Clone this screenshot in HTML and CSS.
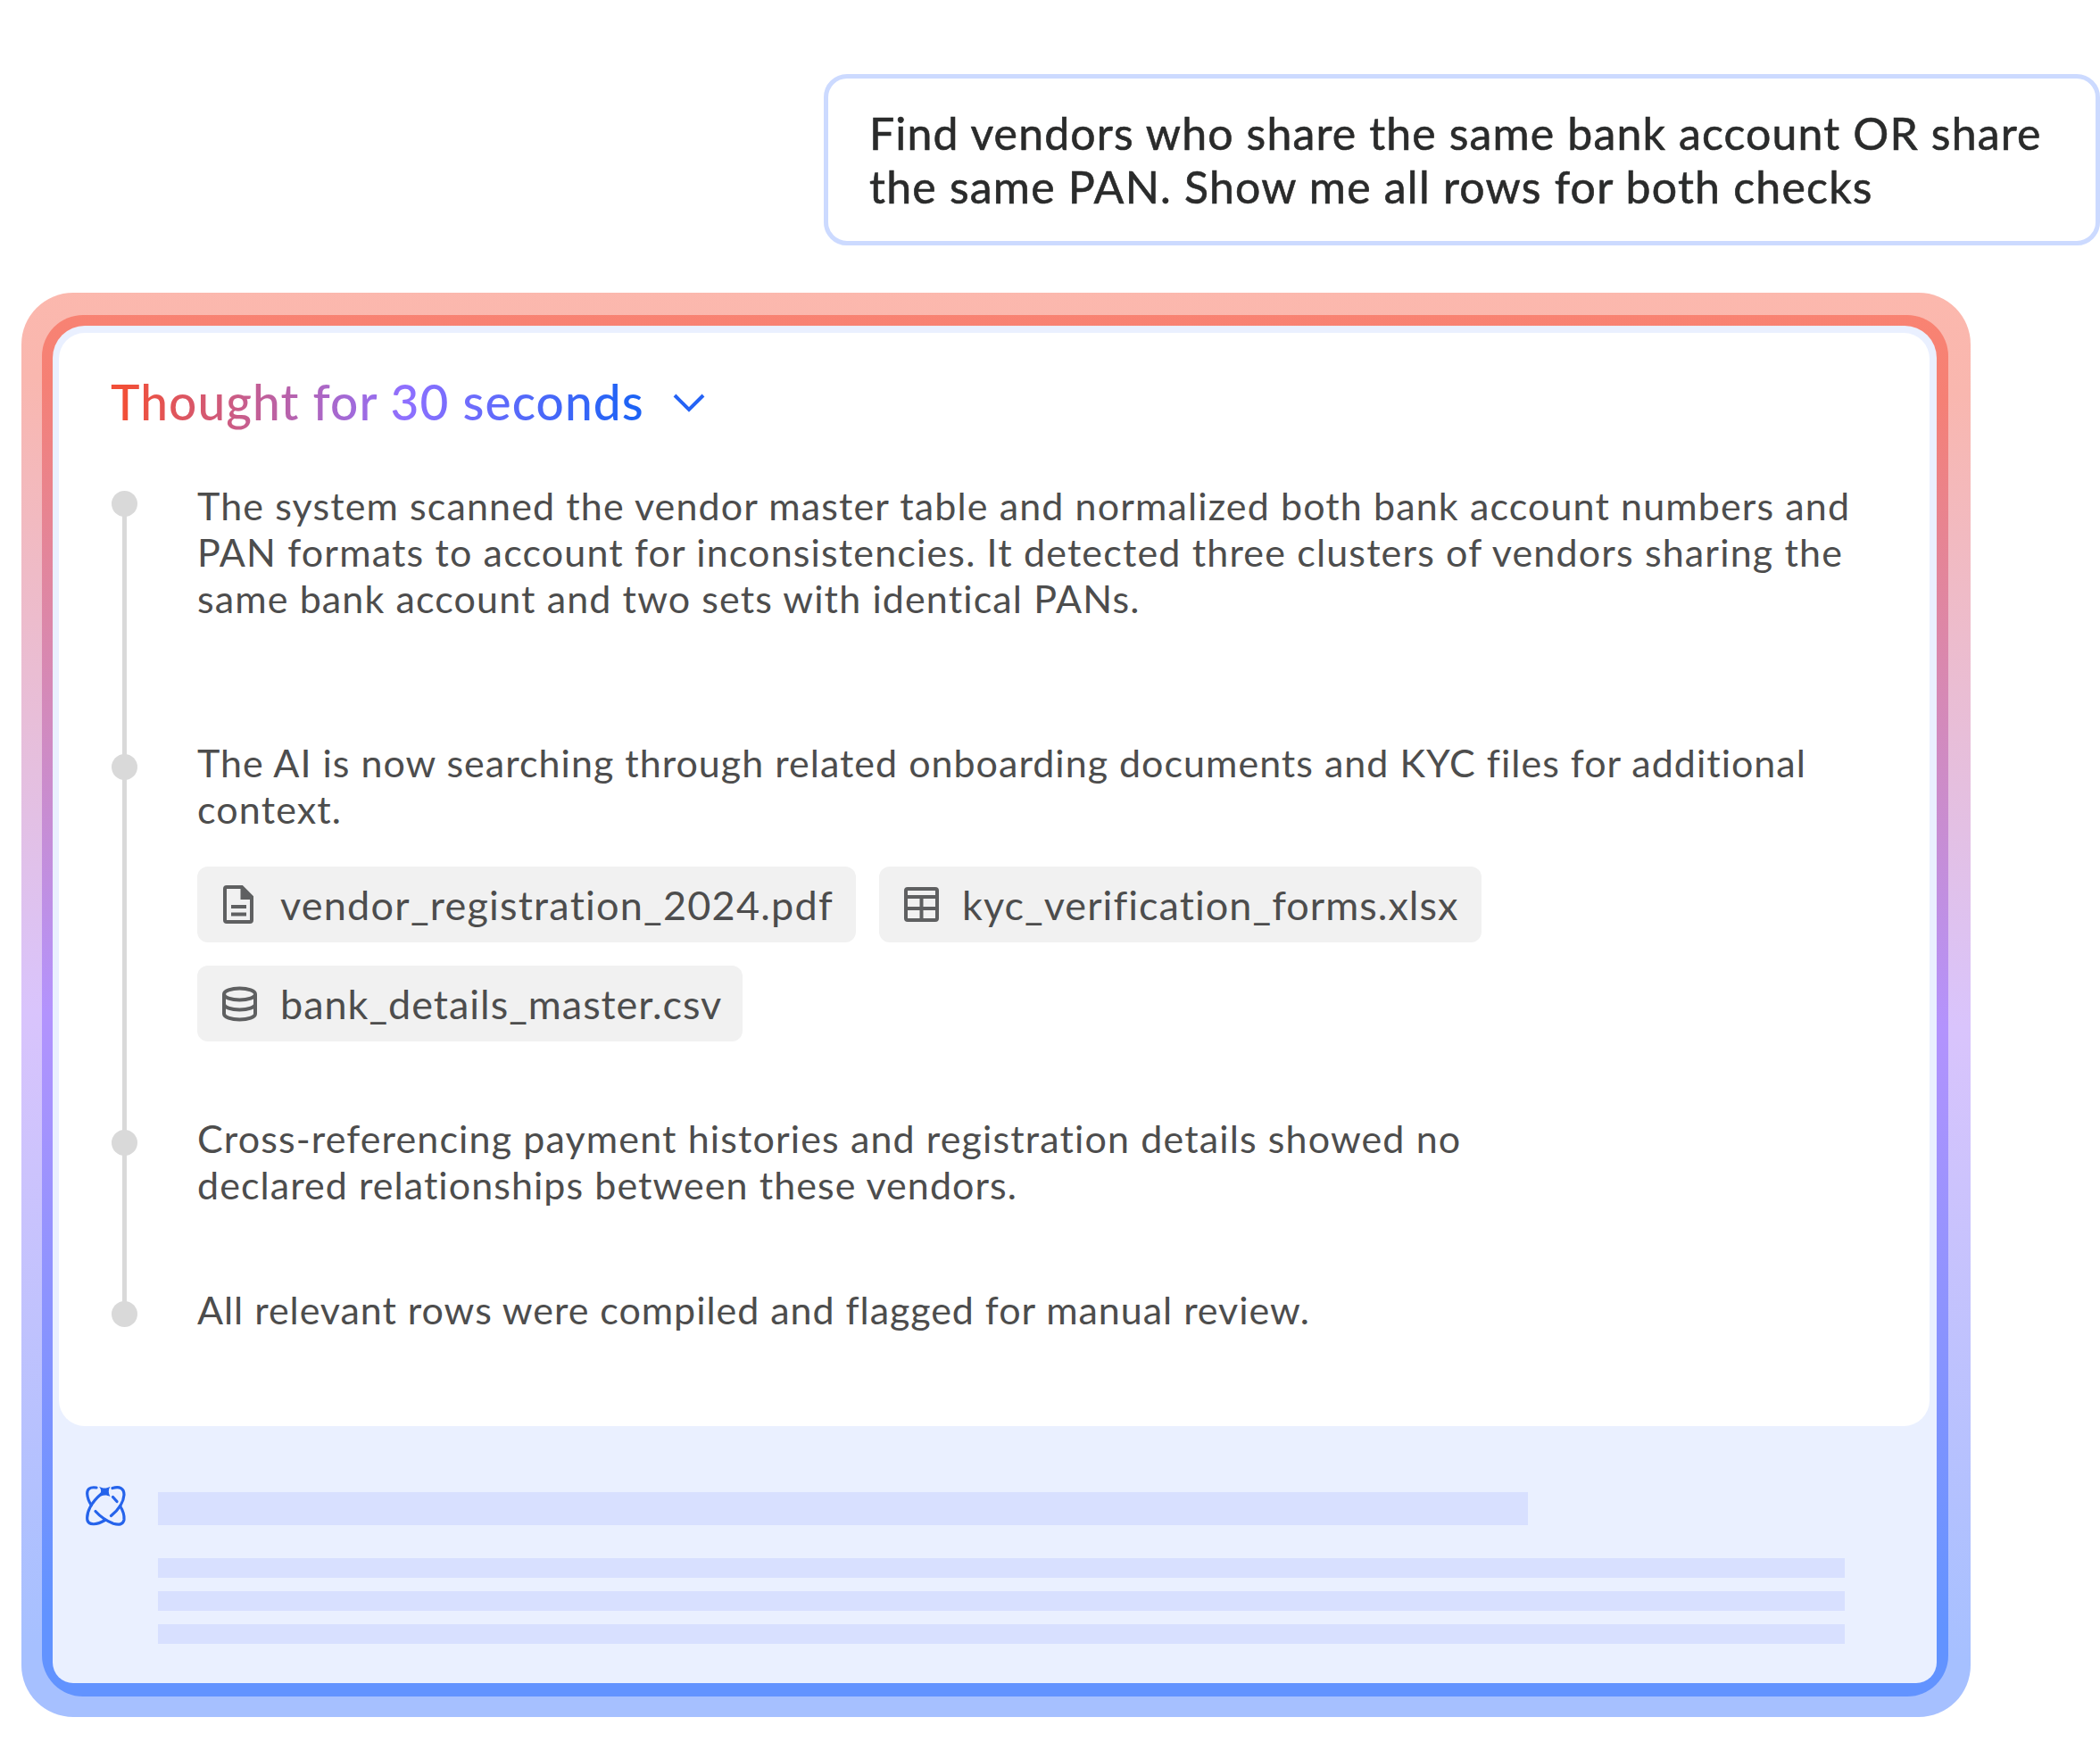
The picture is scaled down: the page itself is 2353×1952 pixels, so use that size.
FILE: index.html
```html
<!DOCTYPE html>
<html lang="en">
<head>
    <meta charset="UTF-8">
    <meta name="viewport" content="width=device-width, initial-scale=1.0">
    <title>Vendor checks</title>
    <link rel="stylesheet" href="styles.css">
</head>
<body>
    <div class="chat">
        <div class="question">
            <p><span class="q1">Find vendors who share the same bank account OR share</span><br><span class="q2">the same PAN. Show me all rows for both checks</span></p>
        </div>

        <div class="glow">
            <div class="ring">
                <div class="panel">
                    <div class="card">
                        <div class="title">
                            <h2>Thought for 30 seconds</h2>
                            <svg class="chevron" viewBox="0 0 36 22"><path d="M2 2 L18 18 L34 2"/></svg>
                        </div>
                        <ul class="steps">
                            <li class="step step1">
                                <p><span class="a1">The system scanned the vendor master table and normalized both bank account numbers and</span><br><span class="a2">PAN formats to account for inconsistencies. It detected three clusters of vendors sharing the</span><br><span class="a3">same bank account and two sets with identical PANs.</span></p>
                            </li>
                            <li class="step step2">
                                <p><span class="b1">The AI is now searching through related onboarding documents and KYC files for additional</span><br><span class="b2">context.</span></p>
                                <div class="files">
                                    <div class="file file1">
                                        <svg viewBox="0 0 40 44"><path class="line" d="M6 2h17l11 11v26a2 2 0 0 1-2 2H6a2 2 0 0 1-2-2V4a2 2 0 0 1 2-2z"/><path class="fill" d="M21.500 2h3l11 11v3h-14z"/><path class="line" d="M11 24h17M11 32.500h17"/></svg>
                                        <span>vendor_registration_2024.pdf</span>
                                    </div>
                                    <div class="file file2">
                                        <svg viewBox="0 0 40 44"><rect class="line" x="3" y="4" width="35" height="35" rx="2"/><path class="line" d="M3 13h35M3 26h35M20.500 13v26"/></svg>
                                        <span>kyc_verification_forms.xlsx</span>
                                    </div>
                                    <div class="file file3">
                                        <svg viewBox="0 0 40 44"><ellipse class="line" cx="20.500" cy="11" rx="17.500" ry="6.500"/><path class="line" d="M3 11v22c0 3.600 7.800 6.500 17.500 6.500s17.500-2.900 17.500-6.500V11M3 22c0 3.600 7.800 6.500 17.500 6.500s17.500-2.900 17.500-6.500"/></svg>
                                        <span>bank_details_master.csv</span>
                                    </div>
                                </div>
                            </li>
                            <li class="step step3">
                                <p><span class="c1">Cross-referencing payment histories and registration details showed no</span><br><span class="c2">declared relationships between these vendors.</span></p>
                            </li>
                            <li class="step step4">
                                <p><span class="d1">All relevant rows were compiled and flagged for manual review.</span></p>
                            </li>
                        </ul>
                    </div>
                    <div class="answer">
                        <svg class="logo" viewBox="0 0 46 46">
                            <path d="M12 2C4 .8 1.500 4 1.700 9C2 13.500 3.500 17.500 6.300 21.500"/>
                            <path d="M30 2.500C38 .3 43 2.500 43 10C42.500 18 37 26.500 28.500 33.500"/>
                            <path d="M30.500 12.500L35 17.500"/>
                            <path d="M38.500 22.500C42 28 43.500 33 43 38C42 43.500 37 44 31 42.300C24 39.500 16 34 11 28.500"/>
                            <path d="M21.500 38.500C13 43.500 3.500 44.800 1.900 38.500C.5 30 6 18.500 17.500 9"/>
                            <path class="spark" d="M15 .8C19 3.200 23.500 3.200 27.500 .8C25.200 4.500 25.200 8 27.500 12C23.500 10 21 10 17 11.500L15.500 10C18 7 17.500 4 15 .8z"/>
                        </svg>
                        <div class="bars">
                            <div class="bar big"></div>
                            <div class="bar"></div>
                            <div class="bar"></div>
                            <div class="bar"></div>
                        </div>
                    </div>
                </div>
            </div>
        </div>
    </div>
</body>
</html>
```

FILE: styles.css
```css
*{
    padding: 0;
    margin: 0;
    box-sizing: border-box;
}
body{
    background: #fff;
    font-family: Lato, "Open Sans", sans-serif;
    font-variant-ligatures: none;
    color: #4d4d4d;
}
.chat{
    width: 2353px;
    height: 1952px;
    padding: 83px 0 0 24px;
    overflow: hidden;
}
p{
    white-space: nowrap;
}
.question{
    width: 1430px;
    height: 192px;
    margin-left: 899px;
    padding: 31px 0 0 46px;
    border: 5px solid #ccdaff;
    border-radius: 26px;
    font-size: 50px;
    line-height: 60px;
    color: #2a2b2b;
    -webkit-text-stroke: .6px #2a2b2b;
}
/* frames around the card */
.glow{
    width: 2184px;
    height: 1596px;
    margin-top: 53px;
    padding: 25px 25px 23px 23px;
    border-radius: 58px;
    background: linear-gradient(180.5deg, #fcb8ad 0%, #f9b7af 7%, #d9c4fc 51%, #a6c0ff 95%);
}
.ring{
    height: 1548px;
    padding: 12px 13px 15px 12px;
    border-radius: 46px;
    background: linear-gradient(180.5deg, #f98372 0%, #f58075 6%, #b393fd 51%, #6293ff 94%);
}
.panel{
    height: 1521px;
    padding: 8px 8px 0 7px;
    border-radius: 36px 36px 23px 23px;
    background: #eaf0ff;
}
.card{
    height: 1225px;
    padding: 44px 0 0 58px;
    border-radius: 29px;
    background: #fff;
}
.title{
    display: flex;
    height: 66px;
}
h2{
    width: 598px;
    font-size: 55px;
    font-weight: 500;
    line-height: 66px;
    letter-spacing: 1.08px;
    white-space: nowrap;
    background: linear-gradient(90deg, #f14f38 3%, #8f70ff 55%, #1d63f5 98%);
    -webkit-background-clip: text;
    background-clip: text;
    color: transparent;
}
.chevron{
    width: 36px;
    height: 22px;
    margin: 24px 0 0 32px;
    fill: none;
    stroke: #2563f5;
    stroke-width: 4;
}
.steps{
    margin-top: 58px;
    list-style: none;
}
.step{
    position: relative;
    padding-left: 97px;
    font-size: 43px;
    line-height: 52px;
}
.step::before{
    content: "";
    position: absolute;
    left: 1px;
    top: 16px;
    width: 29px;
    height: 29px;
    border-radius: 50%;
    background: #d9d9d9;
}
/* line down to the next dot */
.step:not(:last-child)::after{
    content: "";
    position: absolute;
    left: 13px;
    top: 26px;
    width: 5px;
    height: 100%;
    background: #d9d9d9;
}
.step1{ height: 288px; }
.step2{ height: 421px; }
.step3{ height: 192px; }
.step1::before{ top: 9px; }

/* tracking per line */
.q1{ letter-spacing: 1.14px; }
.q2{ letter-spacing: 1.22px; }
.a1{ letter-spacing: 1.12px; }
.a2{ letter-spacing: 1.16px; }
.a3{ letter-spacing: 1.12px; }
.b1{ letter-spacing: 1.01px; }
.b2{ letter-spacing: 1.15px; }
.c1{ letter-spacing: 1.13px; }
.c2{ letter-spacing: 1.06px; }
.d1{ letter-spacing: .96px; }
.file1{ letter-spacing: 1.22px; }
.file2{ letter-spacing: 1.04px; }
.file3{ letter-spacing: .98px; }

.files{
    display: flex;
    flex-wrap: wrap;
    gap: 26px;
    width: 1600px;
    margin-top: 38px;
}
.file{
    display: flex;
    align-items: center;
    height: 85px;
    padding-left: 27px;
    border-radius: 12px;
    background: #f1f1f1;
    font-size: 45px;
    white-space: nowrap;
}
.file1{ width: 738px; }
.file2{ width: 675px; }
.file3{ width: 611px; }
.file svg{
    width: 40px;
    height: 44px;
    margin-right: 26px;
}
.line{
    fill: none;
    stroke: #5f6061;
    stroke-width: 4;
}
.fill{
    fill: #5f6061;
}
.answer{
    display: flex;
    padding: 67px 0 0 30px;
}
.logo{
    width: 46px;
    height: 46px;
    fill: none;
    stroke: #2563eb;
    stroke-width: 3.2;
    stroke-linecap: round;
}
.spark{
    fill: #2563eb;
    stroke: none;
}
.bars{
    width: 1890px;
    margin: 7px 0 0 35px;
}
.bar{
    height: 22px;
    margin-bottom: 15px;
    background: #d8e0ff;
}
.big{
    width: 1535px;
    height: 37px;
    margin-bottom: 37px;
}
```
